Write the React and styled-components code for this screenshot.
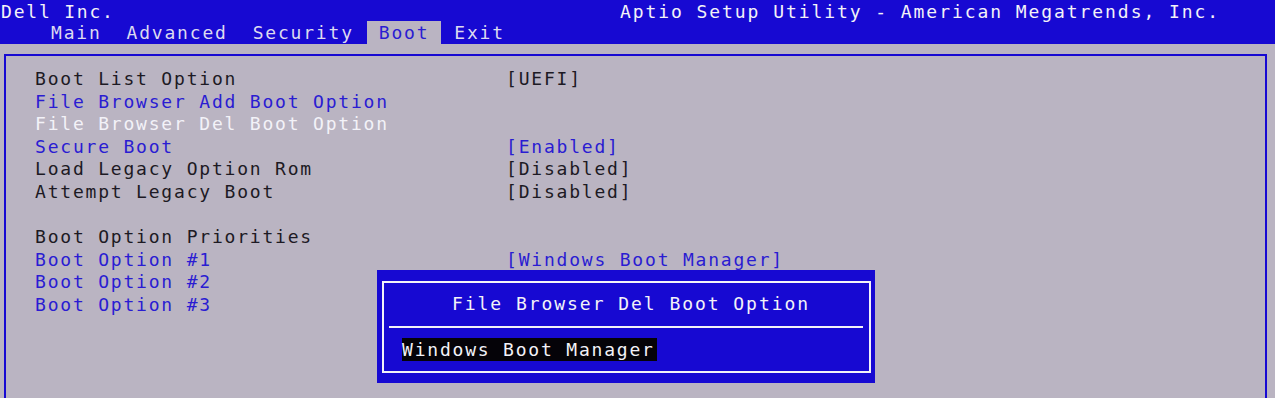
import styled, { createGlobalStyle } from 'styled-components';

const GlobalStyle = createGlobalStyle`
    html, body {
        margin: 0;
        padding: 0;
        background: #bab4c2;
    }
    body {
        font-family: "DejaVu Sans Mono", "Liberation Mono", monospace;
        font-size: 18px;
        letter-spacing: 1.8px;
    }
`

const colors = {
    bios: '#1709d2',
    grey: '#bab4c2',
    dark: '#1d1a24',
    blue: '#2a1cd2',
    white: '#f3f2f8',
    tab: '#dcdaf0',
}

const Screen = styled.div`
    position: relative;
    width: 1275px;
    height: 398px;
    overflow: hidden;
    background: ${colors.grey};
    display: flex;
    flex-direction: column;
`
const Header = styled.header`
    background: ${colors.bios};
    height: 44px;
    display: grid;
    grid-template-rows: 22px 22px;
    padding-left: 1px;
`
const TopLine = styled.div`
    display: flex;
    justify-content: space-between;
    line-height: 23px;
    color: ${colors.white};
    padding-right: 55px;
`
const Vendor = styled.span`
    letter-spacing: 1.93px;
`
const Tabs = styled.nav`
    display: flex;
    align-items: flex-end;
    padding-left: 38px;
`
const Tab = styled.span`
    line-height: 23px;
    padding: 0 12px;
    margin-right: 1px;
    color: ${p => (p.$active ? colors.blue : colors.tab)};
    background: ${p => (p.$active ? colors.grey : 'transparent')};
`
const Frame = styled.main`
    flex: 1;
    margin: 10px 8px 0 4px;
    border: 2px solid ${colors.bios};
    border-bottom: none;
    padding: 12px 0 0 29px;
`
const Row = styled.div`
    display: grid;
    grid-template-columns: 471px 1fr;
    height: 22.6px;
    line-height: 22.6px;
    white-space: pre;
`
const Cell = styled.span`
    color: ${p => colors[p.$tone] || colors.dark};
`
const Dialog = styled.div`
    position: absolute;
    left: 377px;
    top: 270px;
    width: 498px;
    box-sizing: border-box;
    padding: 11px 4px 10px 5px;
    background: ${colors.bios};
`
const DialogInner = styled.div`
    border: 2px solid ${colors.white};
    padding: 10px 6px 10px 5px;
    display: flex;
    flex-direction: column;
`
const DialogTitle = styled.div`
    color: ${colors.white};
    line-height: 22px;
    padding-left: 63px;
    letter-spacing: 1.95px;
    white-space: pre;
`
const Separator = styled.hr`
    border: none;
    height: 2px;
    background: ${colors.white};
    margin: 11px 0 0 0;
`
const DialogItem = styled.div`
    margin-top: 10px;
    padding-left: 13px;
    line-height: 23px;
`
const Selected = styled.span`
    display: inline-block;
    background: #050308;
    color: ${colors.white};
    padding-right: 2px;
    white-space: pre;
`

const rows = [
    ['Boot List Option', 'dark', '[UEFI]', 'dark'],
    ['File Browser Add Boot Option', 'blue'],
    ['File Browser Del Boot Option', 'white'],
    ['Secure Boot', 'blue', '[Enabled]', 'blue'],
    ['Load Legacy Option Rom', 'dark', '[Disabled]', 'dark'],
    ['Attempt Legacy Boot', 'dark', '[Disabled]', 'dark'],
    [''],
    ['Boot Option Priorities', 'dark'],
    ['Boot Option #1', 'blue', '[Windows Boot Manager]', 'blue'],
    ['Boot Option #2', 'blue'],
    ['Boot Option #3', 'blue'],
]

const tabs = ['Main', 'Advanced', 'Security', 'Boot', 'Exit']

export default function App() {
    return (
        <>
            <GlobalStyle />
            <Screen>
                <Header>
                    <TopLine>
                        <span>Dell Inc.</span>
                        <Vendor>Aptio Setup Utility - American Megatrends, Inc.</Vendor>
                    </TopLine>
                    <Tabs>
                        {tabs.map(t => (
                            <Tab key={t} $active={t === 'Boot'}>{t}</Tab>
                        ))}
                    </Tabs>
                </Header>
                <Frame>
                    {rows.map(([label, tone, value, valueTone], i) => (
                        <Row key={i}>
                            <Cell $tone={tone}>{label}</Cell>
                            <Cell $tone={valueTone}>{value || ''}</Cell>
                        </Row>
                    ))}
                </Frame>
                <Dialog>
                    <DialogInner>
                        <DialogTitle>File Browser Del Boot Option</DialogTitle>
                        <Separator />
                        <DialogItem>
                            <Selected>Windows Boot Manager</Selected>
                        </DialogItem>
                    </DialogInner>
                </Dialog>
            </Screen>
        </>
    )
}
